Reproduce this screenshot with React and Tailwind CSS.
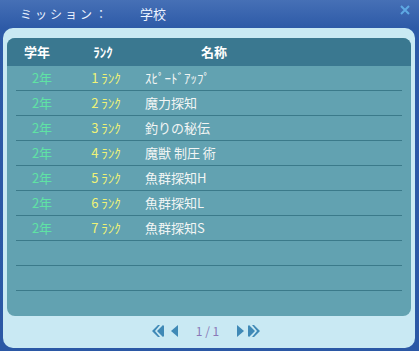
import React from "react";

const rows = [
  { nen: "2年", rank: "1 ﾗﾝｸ", name: "ｽﾋﾟｰﾄﾞｱｯﾌﾟ" },
  { nen: "2年", rank: "2 ﾗﾝｸ", name: "魔力探知" },
  { nen: "2年", rank: "3 ﾗﾝｸ", name: "釣りの秘伝" },
  { nen: "2年", rank: "4 ﾗﾝｸ", name: "魔獣 制圧 術" },
  { nen: "2年", rank: "5 ﾗﾝｸ", name: "魚群探知H" },
  { nen: "2年", rank: "6 ﾗﾝｸ", name: "魚群探知L" },
  { nen: "2年", rank: "7 ﾗﾝｸ", name: "魚群探知S" },
  null,
  null,
  null,
];

function Tri({ dir }) {
  return (
    <svg width="8" height="12" viewBox="0 0 8 12">
      {dir === "left" ? (
        <path d="M7 0 L7 12 L0 6 Z" fill="#3f89b6" />
      ) : (
        <path d="M1 0 L1 12 L8 6 Z" fill="#3f89b6" />
      )}
    </svg>
  );
}

function DoubleTri({ dir }) {
  return (
    <svg width="12" height="12" viewBox="0 0 12 12">
      {dir === "left" ? (
        <path d="M6 0 L8 0 L3 6 L8 12 L6 12 L0 6 Z M11 0 L12 1 L12 11 L11 12 L5 6 Z" fill="#3f89b6" />
      ) : (
        <path d="M6 0 L4 0 L9 6 L4 12 L6 12 L12 6 Z M1 0 L0 1 L0 11 L1 12 L7 6 Z" fill="#3f89b6" />
      )}
    </svg>
  );
}

export default function App() {
  return (
    <div
      className="w-[419px] h-[351px] bg-gradient-to-b from-[#4670b6] via-[#2d5aa7] via-[8%] to-[#2b58a5] flex flex-col overflow-hidden"
      style={{ fontFamily: '"Noto Sans CJK JP", "Noto Sans", sans-serif' }}
    >
      {/* タイトル */}
      <div className="h-[28px] flex items-center relative shrink-0">
        <span className="pl-[20px] w-[140px] text-[12px] tracking-[3px] text-[#eef4ff]">
          ミッション：
        </span>
        <span className="text-[13px] text-[#eef4ff]">学校</span>
        <svg
          className="absolute right-[9px] top-[5px]"
          width="10"
          height="10"
          viewBox="0 0 10 10"
        >
          <path d="M1 1 L9 9 M9 1 L1 9" stroke="#5ea9e3" strokeWidth="2" />
        </svg>
      </div>

      {/* パネル */}
      <div className="ml-[3px] mr-[4px] h-[320px] rounded-[10px] bg-[#c9e9f3] px-[4px] pt-[10px] flex flex-col">
        <div className="h-[278px] rounded-[8px] bg-[#62a2b1] overflow-hidden flex flex-col">
          <div className="h-[28px] bg-[#3a7890] flex items-center text-[13px] font-bold text-white shrink-0">
            <div className="w-[60px] text-center">学年</div>
            <div className="w-[72px] text-center">ﾗﾝｸ</div>
            <div className="w-[150px] text-center">名称</div>
          </div>
          {rows.map((r, i) => (
            <div key={i} className="h-[25px] mx-[9px] flex flex-col shrink-0">
              <div className="flex-1 flex items-center text-[13px] -ml-[9px]">
                {r && (
                  <>
                    <div className="w-[70px] text-center text-[#5fe3a4]">{r.nen}</div>
                    <div className="w-[58px] text-center text-[#f0f276]">{r.rank}</div>
                    <div className="pl-[10px] text-[#f2f5f4]">{r.name}</div>
                  </>
                )}
              </div>
              {i < rows.length - 1 && <div className="h-[1px] bg-[#3b7a8a]" />}
            </div>
          ))}
        </div>

        {/* ページ送り */}
        <div className="flex-1 flex items-center justify-center pr-[4px] pb-[3px]">
          <div className="flex items-center gap-[7px] ml-[-2px]">
            <DoubleTri dir="left" />
            <Tri dir="left" />
          </div>
          <span className="mx-[17px] text-[12px] text-[#8a78b8]">1 / 1</span>
          <div className="flex items-center gap-[4px]">
            <Tri dir="right" />
            <DoubleTri dir="right" />
          </div>
        </div>
      </div>
    </div>
  );
}
